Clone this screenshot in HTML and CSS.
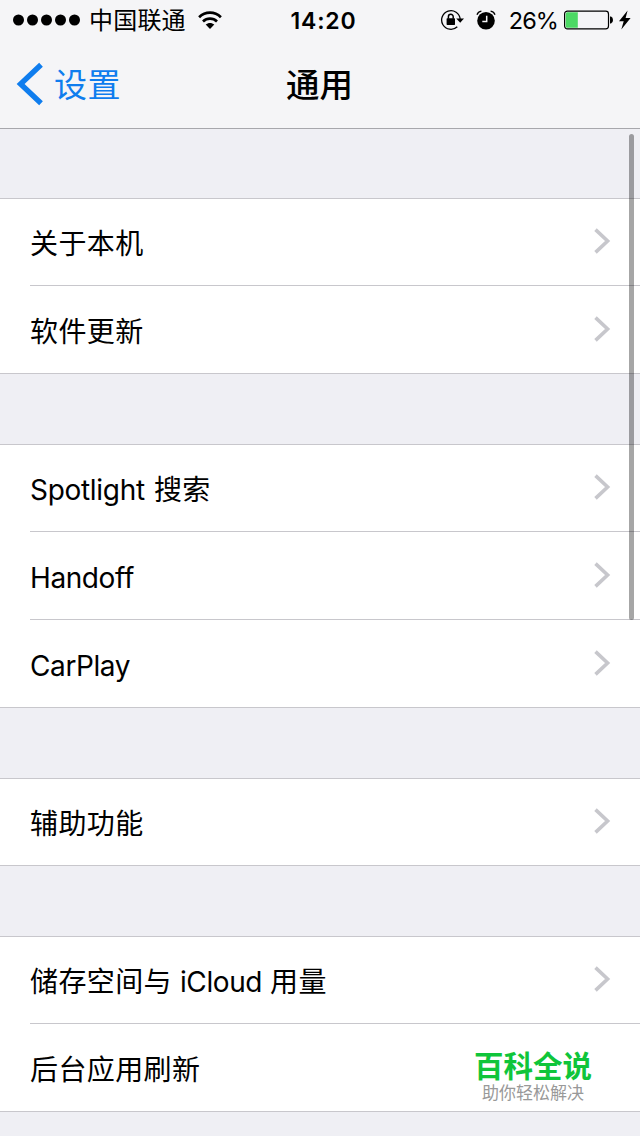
FILE: index.html
```html
<!DOCTYPE html>
<html lang="zh-CN">
<head>
<meta charset="utf-8">
<title>通用</title>
<link rel="stylesheet" href="styles.css">
</head>
<body>
<svg class="defs" width="0" height="0" aria-hidden="true">
  <symbol id="chevron" viewBox="0 0 18 28"><path d="M2.500 2.600 14.600 14 2.500 25.400" fill="none" stroke="#c7c7cc" stroke-width="3.600"/></symbol>
</svg>
<header class="header">
  <div class="status">
    <div class="status-left">
      <svg class="signal" width="68" height="12" viewBox="0 0 68 12"><circle cx="5.500" cy="6" r="5.500"/><circle cx="19.500" cy="6" r="5.500"/><circle cx="33.500" cy="6" r="5.500"/><circle cx="47.500" cy="6" r="5.500"/><circle cx="61.500" cy="6" r="5.500"/></svg>
      <span class="carrier">中国联通</span>
      <svg class="wifi" width="24" height="19" viewBox="0 0 24 19"><g fill="none" stroke="#000" stroke-width="2.700"><path d="M1.100 6.200C7.300.2 16.700.2 22.900 6.200"/><path d="M5 10.400C9 6.600 15 6.600 19 10.400"/></g><path d="M12 18 7.700 13.600C10.100 11.300 13.900 11.300 16.300 13.600Z"/></svg>
    </div>
    <time class="time">14:20</time>
    <div class="status-right">
      <svg class="lock" width="24" height="22" viewBox="0 0 24 22"><path d="M20.200 10.200A9.300 9.300 0 1 0 17.300 17.800" fill="none" stroke="#000" stroke-width="1.300"/><path d="M16.200 9.400H24L20.200 13.800Z"/><rect x="6.600" y="9.300" width="8.400" height="6.600" rx=".6"/><path d="M8.400 9.700V7.700a2.400 2.400 0 0 1 4.800 0v2" fill="none" stroke="#000" stroke-width="1.500"/></svg>
      <svg class="alarm" width="20" height="20" viewBox="0 0 20 20"><circle cx="10" cy="10.700" r="8.800"/><path d="M1 4.800C1.600 3 3.200 1.600 5.400 1.200M19 4.800C18.400 3 16.800 1.600 14.600 1.200" fill="none" stroke="#000" stroke-width="1.300"/><path d="M10.700 5.800v5.700H6.300" fill="none" stroke="#f5f5f7" stroke-width="1.500"/></svg>
      <span class="percent">26%</span>
      <svg class="battery" width="50" height="20" viewBox="0 0 50 20"><rect x=".6" y="1.100" width="43.900" height="17.800" rx="2.800" fill="none" stroke="#000" stroke-width="1.200"/><path d="M3.200 2.200H13.800V17.800H3.200Q1.700 17.800 1.700 16.300V3.700Q1.700 2.200 3.200 2.200Z" fill="#4cd964"/><path d="M46 6.500h1q2 .5 2 3.500t-2 3.500h-1Z"/></svg>
      <svg class="bolt" width="12" height="20" viewBox="0 0 12 20"><path d="M8.600.5 0 11.200H4.700L2.300 19.500 11.600 8H6.600Z"/></svg>
    </div>
  </div>
  <nav class="nav">
    <a class="back"><svg width="28" height="44" viewBox="0 0 28 44"><path d="M25 2.800 4.600 22 25 41.200" fill="none" stroke="#0f7dee" stroke-width="5.400"/></svg><span>设置</span></a>
    <h1 class="title">通用</h1>
    <span></span>
  </nav>
</header>
<main class="content">
  <section class="group">
    <div class="row"><span class="label">关于本机</span><svg class="chevron"><use href="#chevron"/></svg></div>
    <div class="row"><span class="label">软件更新</span><svg class="chevron"><use href="#chevron"/></svg></div>
  </section>
  <section class="group">
    <div class="row"><span class="label"><span class="latin loose">Spotlight </span>搜索</span><svg class="chevron"><use href="#chevron"/></svg></div>
    <div class="row"><span class="label"><span class="latin">Handoff</span></span><svg class="chevron"><use href="#chevron"/></svg></div>
    <div class="row"><span class="label"><span class="latin">CarPlay</span></span><svg class="chevron"><use href="#chevron"/></svg></div>
  </section>
  <section class="group">
    <div class="row"><span class="label">辅助功能</span><svg class="chevron"><use href="#chevron"/></svg></div>
  </section>
  <section class="group">
    <div class="row"><span class="label">储存空间与<span class="latin"> iCloud </span>用量</span><svg class="chevron"><use href="#chevron"/></svg></div>
    <div class="row"><span class="label">后台应用刷新</span><div class="brand"><strong>百科全说</strong><small>助你轻松解决</small></div></div>
  </section>
</main>
<div class="scrollbar"></div>
</body>
</html>
```
FILE: styles.css
```css
* { box-sizing: border-box; }
body {
  margin: 0;
  width: 640px;
  height: 1136px;
  overflow: hidden;
  position: relative;
  background: #efeff4;
  color: #000;
  font-family: Inter, "Noto Sans CJK SC", sans-serif;
}
svg { display: block; flex: none; }
.defs { position: absolute; }
.header {
  height: 129px;
  background: #f5f5f7;
  border-bottom: 1px solid #a7a7ac;
}
.status, .nav {
  display: grid;
  grid-template-columns: 1fr auto 1fr;
  align-items: center;
}
.status { height: 41px; padding: 0 9px 0 13px; }
.status-left, .status-right { display: flex; align-items: center; }
.status-right { justify-content: flex-end; }
.signal { margin-bottom: 1px; }
.carrier { margin-left: 8px; padding-top: 1px; font-size: 24px; line-height: 40px; letter-spacing: .2px; }
.wifi { margin-left: 12px; margin-bottom: 1px; }
.time { padding: 1px 0 0 3px; font-size: 23px; font-weight: 600; letter-spacing: .8px; line-height: 40px; }
.lock { margin-bottom: 2px; }
.alarm { margin-left: 12px; margin-bottom: 2px; }
.percent { margin-left: 13px; padding-top: 1px; font-size: 23.500px; letter-spacing: -.9px; line-height: 40px; }
.battery { margin-left: 6px; margin-bottom: 2px; }
.bolt { margin-left: 5px; margin-bottom: 2px; }
.nav { height: 87px; padding: 0 16px; }
.back { display: flex; align-items: center; gap: 10px; color: #0f7dee; font-size: 33px; line-height: 87px; }
.back svg { margin-bottom: 3px; }
.back span { padding-top: 1px; letter-spacing: .4px; }
.title { margin: 0; padding: 1px 1px 0 0; font-size: 33.500px; font-weight: 500; line-height: 87px; }
.content {
  display: flex;
  flex-direction: column;
  gap: 70px;
  padding-top: 69px;
}
.group {
  background: #fff;
  border-top: 1px solid #c8c7cc;
  border-bottom: 1px solid #c8c7cc;
}
.row {
  display: flex;
  align-items: center;
  justify-content: space-between;
  height: 88px;
  margin-left: 30px;
  padding-right: 29px;
  border-bottom: 1px solid #c8c7cc;
}
.row:first-child { height: 87px; }
.row:last-child { height: 87px; border-bottom: 0; }
.row:only-child { height: 86px; }
.label { font-size: 28px; letter-spacing: .4px; line-height: 82px; padding-top: 4px; white-space: pre; }
.latin { font-size: 28px; letter-spacing: -.4px; word-spacing: .5px; }
.loose { letter-spacing: -.3px; word-spacing: 1.500px; }
.chevron { width: 18px; height: 28px; margin-bottom: 2px; }
.brand { display: flex; flex-direction: column; align-items: center; margin-right: 19px; padding-top: 20px; }
.brand strong { color: #0fc53a; font-size: 29.500px; line-height: 30px; font-weight: 700; }
.brand small { color: #999; font-size: 17px; line-height: 24px; }
.scrollbar {
  position: absolute;
  top: 134px;
  left: 629px;
  width: 5px;
  height: 486px;
  border-radius: 3px;
  background: rgba(0, 0, 0, .35);
}
```
